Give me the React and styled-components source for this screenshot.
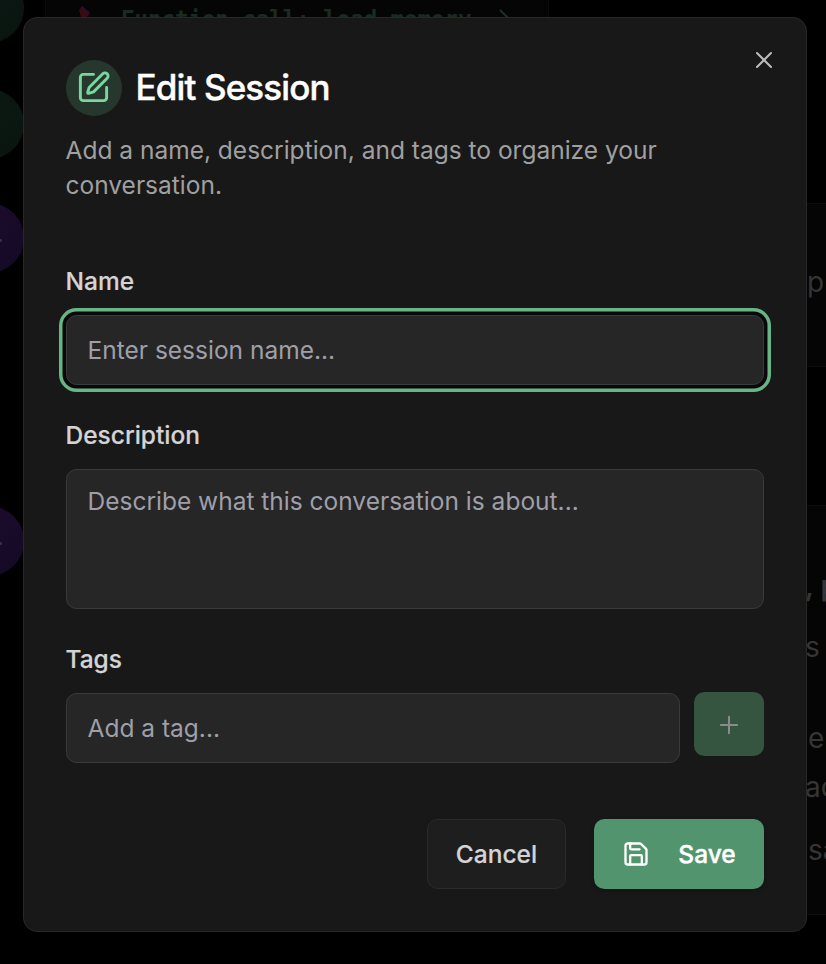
import styled, { createGlobalStyle } from 'styled-components';
import { Plus, Save, SquarePen, X } from 'lucide-react';

const GlobalStyle = createGlobalStyle`
  * {
    box-sizing: border-box;
  }

  body {
    margin: 0;
    background: #000;
    font-family: Inter, 'Liberation Sans', sans-serif;
    -webkit-font-smoothing: antialiased;
  }
`;

const Page = styled.div`
  position: relative;
  width: 826px;
  height: 964px;
  overflow: hidden;
  background: #000;
`;

/* Dimmed conversation */

const Conversation = styled.div`
  display: grid;
  grid-template-columns: 45px 504px 1fr 20px;
  height: 100%;
`;

const AvatarRail = styled.div`
  display: flex;
  flex-direction: column;
  align-items: flex-end;
  width: 24px;
`;

const Avatar = styled.div`
  display: flex;
  flex-shrink: 0;
  align-items: center;
  justify-content: center;
  width: 70px;
  height: 70px;
  margin-top: ${({ $gap }) => $gap}px;
  border-radius: 50%;
  background: ${({ $agent }) =>
    $agent
      ? 'linear-gradient(135deg, #1e0b30, #140a24)'
      : 'linear-gradient(135deg, #0b1b13, #0a1410)'};

  &::after {
    content: '';
    width: 26px;
    height: 3px;
    margin-top: 4px;
    border-radius: 1px;
    background: ${({ $agent }) => ($agent ? '#33303a' : 'transparent')};
  }
`;

const CallCard = styled.div`
  display: flex;
  align-items: flex-start;
  height: 60px;
  padding: 5px 33px;
  border: 1px solid #0b0b0b;
  border-top: 0;
  background: #050505;
  color: #1a2b21;
  white-space: pre;
  font: bold 22.4px/28px 'DejaVu Sans Mono', monospace;

  span {
    margin-left: 30px;
  }

  .chevron {
    margin: 4px 0 0 27px;
  }
`;

const MessageColumn = styled.div`
  grid-column: 4;
  display: flex;
  flex-direction: column;
  padding-top: 203px;
`;

const Message = styled.div`
  height: ${({ $height }) => $height}px;
  margin-bottom: 138px;
  border: solid #0d0d0d;
  border-width: 1px 0;
  background: #050505;
  overflow: hidden;
`;

const Line = styled.div`
  height: 36px;
  margin-top: ${({ $gap }) => $gap}px;
  margin-left: ${({ $shift = 0 }) => $shift}px;
  color: #353535;
  white-space: pre;
  font-size: 28px;
  line-height: 36px;
  font-weight: ${({ $bold }) => ($bold ? 600 : 400)};
`;

/* Dialog */

const Dialog = styled.form`
  position: absolute;
  top: 17px;
  left: 23px;
  width: 784px;
  height: 915px;
  padding: 42px 42px 42px 41.5px;
  border: 1px solid #282828;
  border-radius: 14px;
  background: #181818;
  color: #d4d4d4;
`;

const CloseButton = styled.button`
  position: absolute;
  top: 28px;
  right: 28px;
  display: flex;
  padding: 0;
  border: 0;
  background: none;
  color: #bcbcbc;
`;

const Header = styled.header`
  display: flex;
  align-items: center;
  gap: 14px;
`;

const IconBadge = styled.div`
  display: flex;
  align-items: center;
  justify-content: center;
  width: 56px;
  height: 56px;
  padding: 0 1px 1px 0;
  border-radius: 50%;
  background: #26372d;
  color: #79d69d;
`;

/* the thin stroke evens out light text on the dark panel */
const Title = styled.h2`
  margin: -2px 0 0;
  color: #fff;
  font-size: 35px;
  font-weight: 500;
  line-height: 35px;
  letter-spacing: -0.025em;
  -webkit-text-stroke: 0.4px #fff;
`;

const Subtitle = styled.p`
  margin: 17px 0 61px;
  color: #a0a0a0;
  font-size: 24.5px;
  line-height: 35px;
`;

const Field = styled.div`
  display: flex;
  flex-direction: column;
  gap: 16px;
  margin-bottom: ${({ $gap }) => $gap}px;
`;

const Label = styled.label`
  font-size: 24.5px;
  font-weight: 500;
  line-height: 35px;
  -webkit-text-stroke: 0.2px currentColor;
`;

const Input = styled.input`
  flex: 1;
  min-width: 0;
  width: 100%;
  min-height: 70px;
  height: 70px;
  padding: 0 21px;
  border: 1px solid #3b3b3b;
  border-radius: 10.5px;
  outline: none;
  background: #262626;
  box-shadow: ${({ $focused }) =>
    $focused ? '0 0 0 3.5px #09090b, 0 0 0 7px #67b585' : 'none'};
  font-family: inherit;
  font-size: 24.5px;

  &::placeholder {
    color: #9f9fa9;
    opacity: 1;
  }
`;

const TextArea = styled(Input)`
  flex: none;
  height: 140px;
  padding: 14px 21px;
  line-height: 35px;
  resize: none;
`;

const TagRow = styled.div`
  display: flex;
  align-items: flex-start;
  gap: 14px;
`;

const AddButton = styled.button`
  display: flex;
  align-items: center;
  justify-content: center;
  width: 70px;
  height: 64px;
  margin-top: -1px;
  padding: 2px 0 0;
  border: 0;
  border-radius: 10.5px;
  background: #355541;
  color: #8b8b8b;
`;

const Footer = styled.footer`
  display: flex;
  justify-content: flex-end;
  gap: 28px;
`;

const Button = styled.button`
  display: flex;
  align-items: center;
  justify-content: center;
  gap: 28px;
  width: ${({ $primary }) => ($primary ? 170 : 139)}px;
  height: 70px;
  padding: 0;
  border: ${({ $primary }) => ($primary ? '0' : '1px solid #2b2b2b')};
  border-radius: 10.5px;
  background: ${({ $primary }) => ($primary ? '#52946e' : '#1e1e1e')};
  box-shadow: ${({ $primary }) =>
    $primary ? '0 2px 5px rgba(0, 0, 0, 0.2)' : 'none'};
  color: ${({ $primary }) => ($primary ? '#fff' : '#d4d4d4')};
  font-family: inherit;
  font-size: 24.5px;
  font-weight: 500;
  -webkit-text-stroke: ${({ $primary }) => ($primary ? 0.4 : 0.2)}px
    currentColor;
`;

const PinIcon = () => (
  <svg width="12" height="14" viewBox="0 0 12 14">
    <path d="M3 1l8 7-3 4H2L0 5z" fill="#3a0a12" />
    <path d="M3 1l8 7-1 1-7-6z" fill="#241032" />
  </svg>
);

const Chevron = () => (
  <svg
    className="chevron"
    width="12"
    height="20"
    viewBox="0 0 12 20"
    fill="none"
    stroke="#1f3026"
    strokeWidth="2"
  >
    <path d="M1 1l9 9-9 9" />
  </svg>
);

const Background = () => (
  <Conversation aria-hidden="true">
    <AvatarRail>
      <Avatar $gap={-27} />
      <Avatar $gap={46} />
      <Avatar $gap={44} $agent />
      <Avatar $gap={233} $agent />
    </AvatarRail>
    <CallCard>
      <PinIcon />
      <span>Function call: load_memory</span>
      <Chevron />
    </CallCard>
    <MessageColumn>
      <Message $height={164}>
        <Line $gap={60} $shift={1}>p</Line>
      </Message>
      <Message $height={410}>
        <Line $gap={62} $shift={-1} $bold>, p</Line>
        <Line $gap={25} $shift={-1}>s</Line>
        <Line $gap={55} $shift={2}>e</Line>
        <Line $gap={13} $shift={-1}>ac</Line>
        <Line $gap={27} $shift={2}>sa</Line>
      </Message>
    </MessageColumn>
  </Conversation>
);

const EditSessionDialog = () => (
  <Dialog role="dialog" onSubmit={(e) => e.preventDefault()}>
    <CloseButton type="button" aria-label="Close">
      <X size={28} strokeWidth={1.75} />
    </CloseButton>
    <Header>
      <IconBadge>
        <SquarePen size={35} />
      </IconBadge>
      <Title>Edit Session</Title>
    </Header>
    <Subtitle>
      Add a name, description, and tags to organize your conversation.
    </Subtitle>
    <Field $gap={33}>
      <Label htmlFor="name">Name</Label>
      <Input id="name" placeholder="Enter session name..." $focused />
    </Field>
    <Field $gap={33}>
      <Label htmlFor="description">Description</Label>
      <TextArea
        as="textarea"
        id="description"
        placeholder="Describe what this conversation is about..."
      />
    </Field>
    <Field $gap={56}>
      <Label htmlFor="tag">Tags</Label>
      <TagRow>
        <Input id="tag" placeholder="Add a tag..." />
        <AddButton type="button" aria-label="Add tag">
          <Plus size={28} strokeWidth={1.75} />
        </AddButton>
      </TagRow>
    </Field>
    <Footer>
      <Button type="button">Cancel</Button>
      <Button type="submit" $primary>
        <Save size={28} />
        Save
      </Button>
    </Footer>
  </Dialog>
);

const App = () => (
  <Page>
    <GlobalStyle />
    <Background />
    <EditSessionDialog />
  </Page>
);

export default App;
